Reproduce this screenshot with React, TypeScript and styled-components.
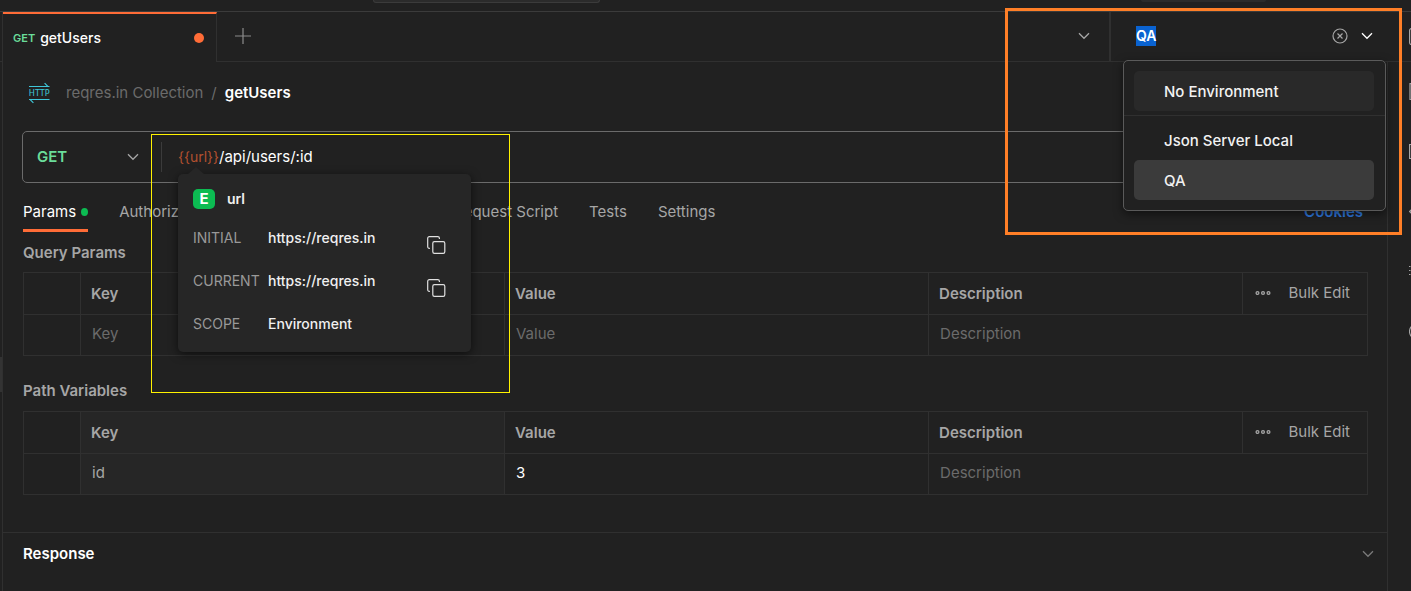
import React, { useEffect, useRef } from "react";
import styled, { createGlobalStyle } from "styled-components";

const c = {
  bg: "#212121",
  raised: "#262626",
  line: "#303030",
  text: "#ffffff",
  muted: "#a6a6a6",
  faint: "#6b6b6b",
  accent: "#ff6c37",
  green: "#0cbb52",
  get: "#6bdd9a",
};

const GlobalStyle = createGlobalStyle`
  *, *::before, *::after { box-sizing: border-box; }
  body {
    margin: 0;
    background: ${c.bg};
    color: ${c.text};
    font-family: Inter, "Liberation Sans", sans-serif;
    font-size: 15px;
    line-height: 20px;
    overflow: hidden;
  }
  button, input, select { font: inherit; color: inherit; }
`;

const Page = styled.div`
  position: relative;
  display: flex;
  flex-direction: column;
  min-height: 100vh;
  overflow: hidden;
`;

const PlainButton = styled.button`
  display: flex;
  align-items: center;
  justify-content: center;
  padding: 0;
  border: 0;
  background: none;
  color: ${c.muted};
  cursor: pointer;
`;

/* Top strip */
const TopStrip = styled.header`
  display: grid;
  grid-template-columns: 1fr 227px 541px 125px 145px;
  height: 12px;
  border-bottom: 1px solid #3b3b3b;
`;
const StripBox = styled.div<{ $col: number; $tall?: boolean }>`
  grid-column: ${(p) => p.$col};
  height: ${(p) => (p.$tall ? 3 : 2)}px;
  background: #2b2b2b;
  border: ${(p) => (p.$tall ? "1px solid #3b3b3b" : "0")};
  border-top: 0;
  border-radius: 0 0 4px 4px;
`;

/* Tab bar */
const TabBar = styled.div`
  display: flex;
  height: 50px;
`;
const BarCell = styled.div`
  border-bottom: 1px solid ${c.line};
`;
const LeftEdge = styled(BarCell)`
  width: 3px;
  border-right: 1px solid ${c.line};
`;
const RequestTab = styled.div`
  display: flex;
  align-items: center;
  gap: 5px;
  width: 214px;
  padding: 0 12px 0 10px;
  border-top: 2px solid ${c.accent};
  border-right: 1px solid ${c.line};
  font-size: 14px;
  font-weight: 500;
`;
const Verb = styled.span`
  color: ${c.get};
  font-size: 11px;
  font-weight: 600;
`;
const UnsavedDot = styled.span`
  width: 10px;
  height: 10px;
  margin-left: auto;
  border-radius: 50%;
  background: ${c.accent};
`;
const TabSpace = styled(BarCell)`
  display: flex;
  flex: 1;
  align-items: center;
  justify-content: space-between;
  padding: 0 19px 1px 18px;
`;
const EnvPicker = styled(BarCell)`
  position: relative;
  display: flex;
  align-items: center;
  gap: 13px;
  width: 278px;
  padding: 0 14px 2px 25px;
  border-left: 2px solid ${c.line};
`;
const EnvInput = styled.input`
  flex: 1;
  min-width: 0;
  padding: 0;
  border: 0;
  outline: 0;
  background: none;
  font-size: 14px;
  font-weight: 600;
  caret-color: transparent;
  &::selection { background: #0a63d1; color: #fff; }
`;
const EnvMenu = styled.ul`
  position: absolute;
  z-index: 5;
  top: 48px;
  left: 12px;
  right: 1px;
  margin: 0;
  padding: 10px 0;
  list-style: none;
  border: 1px solid #5a5a5a;
  border-radius: 5px;
  background: ${c.bg};
  box-shadow: 0 3px 10px rgba(0, 0, 0, 0.5);
`;
const EnvOption = styled.li<{ $first?: boolean }>`
  padding: ${(p) => (p.$first ? "0 11px 4px 10px" : "0 11px 0 10px")};
  margin-bottom: ${(p) => (p.$first ? 4 : 0)}px;
  border-bottom: ${(p) => (p.$first ? `1px solid ${c.line}` : "0")};
`;
const EnvButton = styled.button<{ $bg: string }>`
  display: block;
  width: 100%;
  height: 40px;
  padding: 2px 30px 0;
  border: 0;
  border-radius: 5px;
  background: ${(p) => p.$bg};
  color: #f2f2f2;
  font-weight: 500;
  text-align: left;
`;

/* Body */
const Body = styled.div`
  display: flex;
  flex: 1;
`;
const Gutter = styled.div`
  width: 3px;
  padding-top: 295px;
  border-right: 1px solid ${c.line};
`;
const GutterHandle = styled.div`
  height: 35px;
  background: #333;
`;
const Main = styled.main`
  flex: 1;
  min-width: 0;
`;
const Rail = styled.aside`
  display: flex;
  flex-direction: column;
  gap: 43px;
  width: 24px;
  padding: 21px 0 0 21px;
  border-left: 1px solid ${c.line};
`;
const RailTop = styled(BarCell)`
  display: flex;
  align-items: center;
  width: 24px;
  padding-left: 22px;
`;
const RailButton = styled(PlainButton)`
  width: 17px;
  height: 17px;
  svg { flex: none; }
`;

const Inset = styled.div`
  padding: 0 19px 0 20px;
`;
const Breadcrumb = styled.nav`
  display: flex;
  align-items: center;
  gap: 8px;
  height: 62px;
  padding-left: 5px;
`;
const CrumbLink = styled.a`
  margin-left: 7px;
  color: ${c.faint};
  text-decoration: none;
`;
const CrumbSlash = styled.span`
  color: ${c.faint};
`;
const CrumbCurrent = styled.span`
  font-weight: 600;
`;

const UrlBar = styled.div`
  position: relative;
  display: flex;
  align-items: center;
  height: 52px;
  margin: 7px 0 0 -1px;
  border: 1px solid #6b6b6b;
  border-radius: 5px;
`;
const MethodField = styled.label`
  display: flex;
  align-items: center;
  width: 139px;
  height: 30px;
  padding: 0 22px 0 14px;
  border-right: 1px solid #3b3b3b;
`;
const MethodSelect = styled.select`
  flex: 1;
  padding: 0;
  border: 0;
  outline: 0;
  appearance: none;
  background: ${c.bg};
  color: ${c.get};
  font-weight: 600;
`;
const Variable = styled(PlainButton)`
  margin-left: 16px;
  color: #b2502f;
  font-size: 14px;
`;
const UrlInput = styled.input`
  flex: 1;
  min-width: 0;
  padding: 0;
  border: 0;
  outline: 0;
  background: none;
`;

/* Variable details */
const Popup = styled.section`
  position: absolute;
  z-index: 4;
  top: 42px;
  left: 155px;
  width: 293px;
  padding: 0 25px 12px 15px;
  border-radius: 5px;
  background: ${c.raised};
  box-shadow: 0 2px 10px rgba(0, 0, 0, 0.6);
  color: #f0f0f0;
  font-size: 14px;
  &::before {
    content: "";
    position: absolute;
    top: -7px;
    left: 10px;
    border: 8px solid transparent;
    border-top: 0;
    border-bottom: 7px solid ${c.raised};
  }
`;
const PopupHead = styled.h2`
  display: flex;
  align-items: center;
  gap: 12px;
  height: 50px;
  margin: 0;
  font-size: 14px;
  font-weight: 600;
`;
const ScopeBadge = styled.span`
  width: 22px;
  border-radius: 5px;
  background: ${c.green};
  color: #fff;
  font-size: 15px;
  font-weight: 700;
  text-align: center;
`;
const PopupList = styled.dl`
  display: flex;
  flex-direction: column;
  gap: 13px;
  margin: 0;
`;
const PopupRow = styled.div`
  display: flex;
  height: 30px;
  line-height: 28px;
  dt { width: 75px; color: #999; }
  dd { margin: 0; font-weight: 500; }
`;
const CopyButton = styled(PlainButton)`
  height: 18px;
  margin: 12px 0 0 auto;
  color: #e0e0e0;
`;

/* Request tabs */
const Tabs = styled.nav`
  display: flex;
  gap: 31px;
  margin-top: 9px;
`;
const TabLink = styled.a<{ $active?: boolean; $end?: boolean }>`
  display: flex;
  align-items: center;
  gap: 5px;
  padding-top: 3px;
  border-bottom: 3px solid ${(p) => (p.$active ? c.accent : "transparent")};
  color: ${(p) => (p.$active ? "#fff" : p.$end ? "#2f7ae0" : c.muted)};
  font-weight: ${(p) => (p.$end ? 600 : 400)};
  line-height: 34px;
  margin-left: ${(p) => (p.$end ? "auto" : "0")};
  margin-right: ${(p) => (p.$end ? "5px" : "0")};
  text-decoration: none;
  white-space: nowrap;
`;
const ActiveDot = styled.span`
  width: 7px;
  height: 8px;
  border-radius: 50%;
  background: ${c.green};
`;

/* Parameter tables */
const SectionTitle = styled.h3<{ $spaced?: boolean }>`
  margin: 0;
  padding: ${(p) => (p.$spaced ? "16px 0 1px" : "2px 0 0")};
  color: ${c.muted};
  font-size: 15px;
  font-weight: 600;
  line-height: 38px;
`;
const Table = styled.table<{ $locked?: boolean }>`
  width: 100%;
  table-layout: fixed;
  border-collapse: collapse;
  text-align: left;
  th, td { padding: 0 10px; border: 1px solid ${c.line}; }
  th { height: 42px; color: ${c.muted}; font-weight: 600; }
  td { height: 41px; padding: 0 10px 3px 11px; }
  th:nth-child(2), td:nth-child(2) {
    background: ${(p) => (p.$locked ? "#262626" : "none")};
  }
`;
const CheckCol = styled.col`
  width: 57px;
`;
const WideCol = styled.col`
  width: 31.55%;
`;
const ActionCol = styled.col`
  width: 125px;
`;
const CellInput = styled.input<{ $color?: string }>`
  display: block;
  width: 100%;
  padding: 0;
  border: 0;
  outline: 0;
  background: none;
  color: ${(p) => p.$color || "#fff"};
  &::placeholder { color: ${c.faint}; opacity: 1; }
`;
const Actions = styled.div`
  display: flex;
  justify-content: space-between;
  padding: 0 7px 2px 2px;
  font-weight: 400;
`;

const ResponseBar = styled.section`
  display: flex;
  align-items: center;
  justify-content: space-between;
  height: 42px;
  margin-top: 37px;
  padding: 0 13px 0 20px;
  border-top: 1px solid ${c.line};
`;
const ResponseTitle = styled.h2`
  margin: 0;
  font-size: 15px;
  font-weight: 600;
`;

/* Callout frames */
const YellowFrame = styled.div`
  position: absolute;
  z-index: 6;
  top: 134px;
  left: 151px;
  width: 359px;
  height: 259px;
  border: 1px solid #fff200;
  pointer-events: none;
`;
const OrangeFrame = styled.div`
  position: absolute;
  z-index: 6;
  top: 8px;
  right: 9px;
  width: 397px;
  height: 227px;
  border: 3px solid #ff7f27;
  pointer-events: none;
`;

const Chevron = ({ color = c.muted }: { color?: string }) => (
  <svg width="12" height="8" viewBox="0 0 12 8" fill="none" stroke={color} strokeWidth="1.3" aria-hidden="true">
    <path d="M1 1.2 6 6.3 11 1.2" />
  </svg>
);

const CopyIcon = () => (
  <svg width="19" height="18" viewBox="0 0 19 18" fill="none" stroke="currentColor" strokeWidth="1.2" aria-hidden="true">
    <rect x="5.8" y="5.6" width="12" height="11.8" rx="1.6" />
    <path d="M2.9 12.4H2.3A1.6 1.6 0 0 1 .7 10.8V2.2A1.6 1.6 0 0 1 2.3.6h8.5a1.6 1.6 0 0 1 1.6 1.6v.7" />
  </svg>
);

const DotsIcon = () => (
  <svg width="16" height="6" viewBox="0 0 16 6" fill="none" stroke="currentColor" strokeWidth="1.3" aria-hidden="true">
    <circle cx="2.5" cy="3" r="1.4" />
    <circle cx="8" cy="3" r="1.4" />
    <circle cx="13.5" cy="3" r="1.4" />
  </svg>
);

const HttpIcon = () => (
  <svg width="23" height="22" viewBox="0 0 23 22" fill="none" stroke="#3fc6d8" strokeWidth="1.2" aria-hidden="true">
    <path d="M1 4.500h20.500M16.600 1.200 19.800 4.400" />
    <path d="M21.500 17.500H1M5.400 20.800 2.200 17.600" />
    <text x="11.2" y="14.2" textAnchor="middle" fill="#3fc6d8" stroke="none" fontFamily="'DejaVu Sans Condensed', 'DejaVu Sans', sans-serif" fontSize="9">HTTP</text>
  </svg>
);

const railShapes = [
  { name: "Comments", shape: <path d="M1 0v17M1 .6h14v16H1" /> },
  { name: "Changelog", shape: <path d="M.6 1.500h14v14H.6z" /> },
  { name: "Code", shape: <path d="M4 5 .6 8.500 4 12M11 5l4.500 3.500L11 12" /> },
  { name: "Related", shape: <path d="M0 3.500h1.500M0 7.500h1.500M0 11.500h1.500M3 3.500h12M3 7.500h12M3 11.500h12" /> },
  { name: "Info", shape: <circle cx="8" cy="8.500" r="7.500" /> },
];

const ParamTable = ({ label, locked, keyText, value }: { label: string; locked?: boolean; keyText?: string; value?: string }) => (
  <Table $locked={locked} aria-label={label}>
    <colgroup>
      <CheckCol />
      <WideCol />
      <WideCol />
      <col />
      <ActionCol />
    </colgroup>
    <thead>
      <tr>
        <th />
        <th scope="col">Key</th>
        <th scope="col">Value</th>
        <th scope="col">Description</th>
        <th>
          <Actions>
            <PlainButton aria-label="More options"><DotsIcon /></PlainButton>
            <PlainButton>Bulk Edit</PlainButton>
          </Actions>
        </th>
      </tr>
    </thead>
    <tbody>
      <tr>
        <td />
        <td><CellInput aria-label="Key" placeholder="Key" defaultValue={keyText} $color={c.muted} readOnly={locked} /></td>
        <td><CellInput aria-label="Value" placeholder="Value" defaultValue={value} /></td>
        <td colSpan={2}><CellInput aria-label="Description" placeholder="Description" /></td>
      </tr>
    </tbody>
  </Table>
);

export default function App() {
  const envRef = useRef<HTMLInputElement>(null);
  useEffect(() => {
    envRef.current?.focus();
    envRef.current?.select();
  }, []);

  return (
    <Page>
      <GlobalStyle />
      <TopStrip>
        <StripBox $col={2} $tall />
        <StripBox $col={4} />
      </TopStrip>
      <TabBar>
        <LeftEdge />
        <RequestTab>
          <Verb>GET</Verb>
          <span>getUsers</span>
          <UnsavedDot />
        </RequestTab>
        <TabSpace>
          <PlainButton aria-label="New tab">
            <svg width="16" height="16" viewBox="0 0 16 16" stroke="#8c8c8c" strokeWidth="1.2" aria-hidden="true">
              <path d="M8 0v16M0 8h16" />
            </svg>
          </PlainButton>
          <PlainButton aria-label="List open tabs"><Chevron /></PlainButton>
        </TabSpace>
        <EnvPicker>
          <EnvInput ref={envRef} aria-label="Environment" defaultValue="QA" />
          <PlainButton aria-label="Clear environment">
            <svg width="16" height="16" viewBox="0 0 16 16" fill="none" stroke="currentColor" strokeWidth="1.2" aria-hidden="true">
              <circle cx="8" cy="8" r="7" />
              <path d="m5.500 5.500 5 5m0-5-5 5" />
            </svg>
          </PlainButton>
          <PlainButton aria-label="Open environments"><Chevron color="#fff" /></PlainButton>
          <EnvMenu>
            <EnvOption $first><EnvButton $bg="#292929">No Environment</EnvButton></EnvOption>
            <EnvOption><EnvButton $bg="transparent">Json Server Local</EnvButton></EnvOption>
            <EnvOption><EnvButton $bg="#3b3b3b">QA</EnvButton></EnvOption>
          </EnvMenu>
        </EnvPicker>
        <RailTop>
          <RailButton aria-label="Documentation">
            <svg width="17" height="17" viewBox="0 0 17 17" fill="none" stroke="currentColor" strokeWidth="1.2"><rect x="0.600" y="0.600" width="14" height="16" rx="2" /></svg>
          </RailButton>
        </RailTop>
      </TabBar>
      <Body>
        <Gutter><GutterHandle /></Gutter>
        <Main>
          <Inset>
            <Breadcrumb aria-label="Breadcrumb">
              <HttpIcon />
              <CrumbLink href="#collection">reqres.in Collection</CrumbLink>
              <CrumbSlash>/</CrumbSlash>
              <CrumbCurrent>getUsers</CrumbCurrent>
            </Breadcrumb>
            <UrlBar>
              <MethodField>
                <MethodSelect aria-label="Method" defaultValue="GET">
                  <option>GET</option>
                  <option>POST</option>
                </MethodSelect>
                <Chevron />
              </MethodField>
              <Variable>{"{{url}}"}</Variable>
              <UrlInput aria-label="Request URL" defaultValue="/api/users/:id" />
              <Popup>
                <PopupHead><ScopeBadge>E</ScopeBadge>url</PopupHead>
                <PopupList>
                  <PopupRow>
                    <dt>INITIAL</dt>
                    <dd>https://reqres.in</dd>
                    <CopyButton aria-label="Copy initial value"><CopyIcon /></CopyButton>
                  </PopupRow>
                  <PopupRow>
                    <dt>CURRENT</dt>
                    <dd>https://reqres.in</dd>
                    <CopyButton aria-label="Copy current value"><CopyIcon /></CopyButton>
                  </PopupRow>
                  <PopupRow>
                    <dt>SCOPE</dt>
                    <dd>Environment</dd>
                  </PopupRow>
                </PopupList>
              </Popup>
            </UrlBar>
            <Tabs aria-label="Request settings">
              <TabLink href="#params" $active>Params<ActiveDot /></TabLink>
              <TabLink href="#auth">Authorization</TabLink>
              <TabLink href="#headers">Headers (6)</TabLink>
              <TabLink href="#body">Body</TabLink>
              <TabLink href="#prerequest">Pre-request Script</TabLink>
              <TabLink href="#tests">Tests</TabLink>
              <TabLink href="#settings">Settings</TabLink>
              <TabLink href="#cookies" $end>Cookies</TabLink>
            </Tabs>
            <SectionTitle>Query Params</SectionTitle>
            <ParamTable label="Query Params" />
            <SectionTitle $spaced>Path Variables</SectionTitle>
            <ParamTable label="Path Variables" locked keyText="id" value="3" />
          </Inset>
          <ResponseBar>
            <ResponseTitle>Response</ResponseTitle>
            <PlainButton aria-label="Expand response"><Chevron color="#7a7a7a" /></PlainButton>
          </ResponseBar>
        </Main>
        <Rail>
          {railShapes.map((r) => (
            <RailButton key={r.name} aria-label={r.name}>
              <svg width="17" height="17" viewBox="0 0 17 17" fill="none" stroke="currentColor" strokeWidth="1.2">{r.shape}</svg>
            </RailButton>
          ))}
        </Rail>
      </Body>
      <YellowFrame />
      <OrangeFrame />
    </Page>
  );
}
